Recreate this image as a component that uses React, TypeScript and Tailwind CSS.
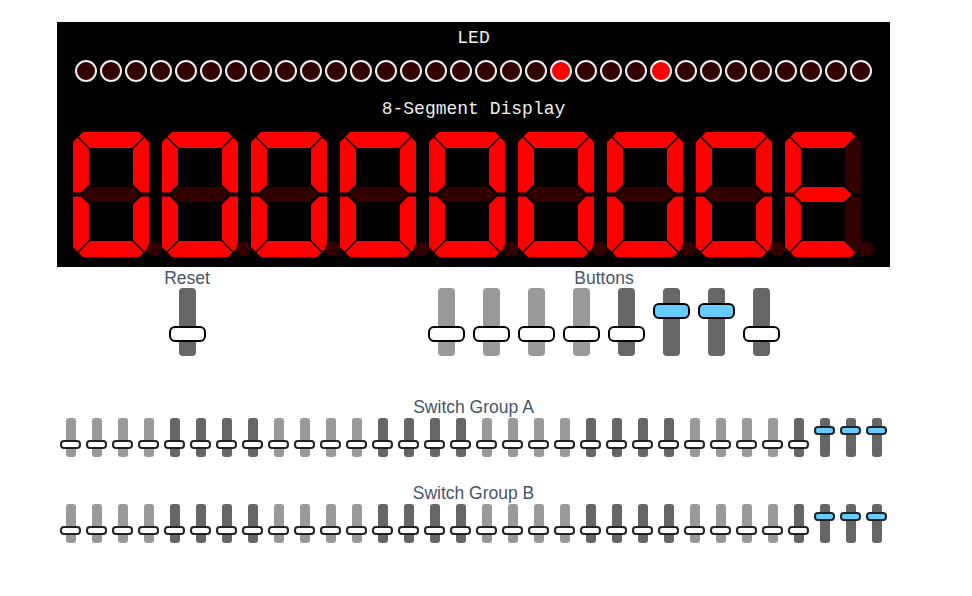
const SEG: Record<string, string> = {
  a: "10,0 66,0 70.5,4.5 59,16 17,16 5.5,4.5",
  b: "76,10 71.5,5.5 60,17 60,52.5 68,60.5 76,60.5",
  c: "76,64.5 68,64.5 60,72.5 60,108 71.5,119.5 76,115",
  d: "5.5,120.5 17,109 59,109 70.5,120.5 66,125 10,125",
  e: "0,64.5 8,64.5 16,72.5 16,108 4.5,119.5 0,115",
  f: "0,10 4.5,5.5 16,17 16,52.5 8,60.5 0,60.5",
  g: "9,62.5 17,55 59,55 67,62.5 59,70 17,70",
};

const ON = "#ff0000";
const OFF = "#330000";

// which segments are lit, per digit
const DIGITS = ["abcdef", "abcdef", "abcdef", "abcdef", "abcdef", "abcdef", "abcdef", "abcdef", "adefg"];

const LIT_LEDS = [19, 23];
const SWITCHES_ON = [29, 30, 31];
const BUTTONS_ON = [5, 6];

function Digit({ lit }: { lit: string }) {
  return (
    <svg width="89" height="125" viewBox="0 0 89 125">
      {Object.entries(SEG).map(([k, pts]) => (
        <polygon key={k} points={pts} fill={lit.includes(k) ? ON : OFF} />
      ))}
      <circle cx="81.5" cy="117" r="7.5" fill={OFF} />
    </svg>
  );
}

function BigSlider({ on, dark }: { on: boolean; dark: boolean }) {
  return (
    <div className="relative w-[37px] h-[68px]">
      <div className={`mx-auto w-[17px] h-full rounded-[4px] ${dark ? "bg-[#666666]" : "bg-[#999999]"}`} />
      <div
        className={`absolute left-0 w-[37px] h-[16px] rounded-[6px] border-2 border-black ${
          on ? "top-[15px] bg-[#66ccff]" : "top-[38px] bg-white"
        }`}
      />
    </div>
  );
}

function Switch({ on, dark }: { on: boolean; dark: boolean }) {
  return (
    <div className="relative w-[21px] h-[39px]">
      <div className={`mx-auto w-[10px] h-full rounded-[3px] ${dark ? "bg-[#666666]" : "bg-[#999999]"}`} />
      <div
        className={`absolute left-0 w-[21px] h-[9px] rounded-[4px] border-2 border-[#222222] ${
          on ? "top-[8px] bg-[#66ccff]" : "top-[22px] bg-white"
        }`}
      />
    </div>
  );
}

function Label({ children, shift }: { children: React.ReactNode; shift?: boolean }) {
  return (
    <div
      className={`text-[17.5px] leading-[20px] text-[#475569] font-['Liberation_Sans',Arial,sans-serif] ${
        shift ? "pt-[2px]" : "pt-[1px]"
      }`}
    >
      {children}
    </div>
  );
}

function SwitchGroup({ name }: { name: string }) {
  return (
    <div className="flex flex-col items-center">
      <Label shift>{name}</Label>
      <div className="mt-[1px] flex gap-[5px]">
        {Array.from({ length: 32 }).map((_, i) => (
          <Switch key={i} on={SWITCHES_ON.includes(i)} dark={Math.floor(i / 4) % 2 === 1} />
        ))}
      </div>
    </div>
  );
}

export default function App() {
  return (
    <div className="w-[972px] h-[596px] bg-white pl-[57px] pt-[22px]">
      <div className="w-[833px]">
        {/* display panel */}
        <div className="h-[245px] bg-black flex flex-col items-center pt-[7px] font-['Liberation_Mono','Courier_New',monospace] text-[#eeeeee]">
          <div className="text-[18px] leading-[18px]">LED</div>
          <div className="mt-[13px] flex gap-[3px]">
            {Array.from({ length: 32 }).map((_, i) => (
              <div
                key={i}
                className={`w-[22px] h-[22px] rounded-full border-2 border-[#eeeeee] ${
                  LIT_LEDS.includes(i) ? "bg-[#ff0000]" : "bg-[#330000]"
                }`}
              />
            ))}
          </div>
          <div className="mt-[18px] text-[18px] leading-[18px] whitespace-pre">8-Segment Display</div>
          <div className="mt-[13.5px] flex">
            {DIGITS.map((d, i) => (
              <Digit key={i} lit={d} />
            ))}
          </div>
        </div>

        {/* reset + buttons */}
        <div className="flex">
          <div className="ml-[100px] w-[60px] flex flex-col items-center">
            <Label>Reset</Label>
            <BigSlider on={false} dark />
          </div>
          <div className="ml-[211px] flex flex-col items-center">
            <Label>Buttons</Label>
            <div className="flex gap-[8px]">
              {Array.from({ length: 8 }).map((_, i) => (
                <BigSlider key={i} on={BUTTONS_ON.includes(i)} dark={i >= 4} />
              ))}
            </div>
          </div>
        </div>

        <div className="mt-[39px]">
          <SwitchGroup name="Switch Group A" />
        </div>
        <div className="mt-[24px]">
          <SwitchGroup name="Switch Group B" />
        </div>
      </div>
    </div>
  );
}
